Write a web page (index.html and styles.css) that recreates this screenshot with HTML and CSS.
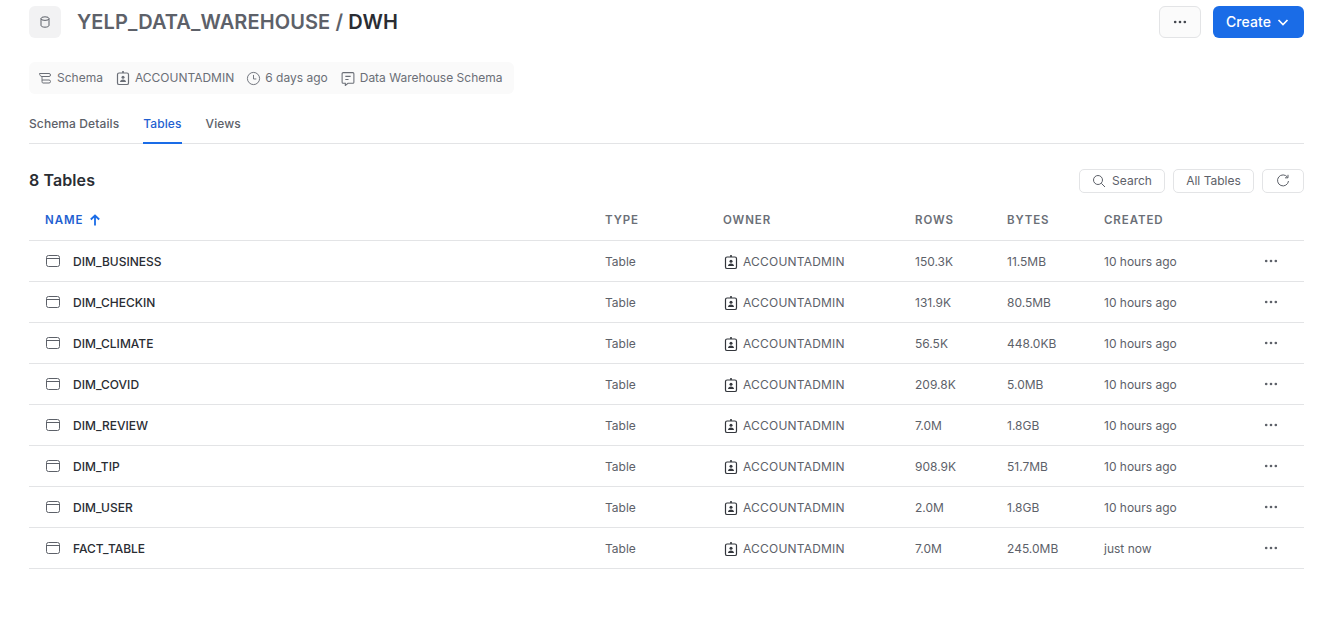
FILE: index.html
```html
<!DOCTYPE html>
<html>
<head>
  <title>YELP_DATA_WAREHOUSE / DWH</title>
  <link rel="stylesheet" href="styles.css">
</head>
<body>
  <svg class="defs" width="0" height="0">
    <symbol id="i-owner" viewBox="0 0 16 16">
      <path d="M8 1v2" fill="none" stroke="currentColor" stroke-width="1.6"/>
      <rect x="2.500" y="3" width="11" height="11.500" rx="1.600" fill="none" stroke="currentColor" stroke-width="1.200"/>
      <circle cx="8" cy="7.200" r="1.500" fill="currentColor"/>
      <path d="M5 12c0-1.700 1.300-2.600 3-2.600s3 .9 3 2.600z" fill="currentColor"/>
    </symbol>
    <symbol id="i-table" viewBox="0 0 16 16">
      <rect x="1.500" y="2.500" width="13" height="11" rx="2" fill="none" stroke="currentColor" stroke-width="1"/>
      <path d="M1.500 5.500h13" fill="none" stroke="currentColor" stroke-width="1"/>
    </symbol>
    <symbol id="i-more" viewBox="0 0 16 16">
      <circle cx="2.500" cy="8" r="1.500" fill="currentColor"/>
      <circle cx="8" cy="8" r="1.500" fill="currentColor"/>
      <circle cx="13.500" cy="8" r="1.500" fill="currentColor"/>
    </symbol>
  </svg>

  <header class="top">
    <div class="db-icon">
      <svg width="12" height="12" viewBox="0 0 12 12" fill="none" stroke="#5d6169" stroke-width="1">
        <ellipse cx="6" cy="2.600" rx="4" ry="1.800"/>
        <path d="M2 2.600v6.800c0 1 1.800 1.800 4 1.800s4-.8 4-1.800V2.600"/>
      </svg>
    </div>
    <h1 class="title">YELP_DATA_WAREHOUSE / <b>DWH</b></h1>
    <button class="btn-more"><svg width="14" height="14"><use href="#i-more"/></svg></button>
    <button class="btn-create"><span class="create-label">Create</span>
      <svg width="12" height="12" viewBox="0 0 12 12" fill="none" stroke="#fff" stroke-width="1.700"><path d="M1.500 4l4.500 4.500L10.500 4"/></svg>
    </button>
  </header>

  <div class="meta">
    <span class="meta-item">
      <svg width="15" height="14" viewBox="0 0 14 14" fill="none" stroke="currentColor" stroke-width="1"><path d="M1 2.500h9.500a1.500 1.500 0 0 1 0 3H3.500M3.500 5.500c0 1.500 0 3.500 0 3.500h7a1.500 1.500 0 0 1 1.500 1.500v0a1.500 1.500 0 0 1-1.500 1.500h-6c-1 0-1-1-1-3"/><path d="M1 2.500c0 1.500 1 3 2.500 3"/></svg>
      <span>Schema</span></span>
    <span class="meta-item">
      <svg width="16" height="16"><use href="#i-owner"/></svg>
      <span>ACCOUNTADMIN</span></span>
    <span class="meta-item">
      <svg width="15" height="15" viewBox="0 0 16 16" fill="none" stroke="currentColor" stroke-width="1"><circle cx="8" cy="8" r="6.500"/><path d="M8 4.200V8.500h3"/></svg>
      <span>6 days ago</span></span>
    <span class="meta-item">
      <svg width="16" height="15" viewBox="0 0 14 14" fill="none" stroke="currentColor" stroke-width="1"><path d="M2.500 1.500h9a1 1 0 0 1 1 1v8a1 1 0 0 1-1 1H7l-2.500 2v-2h-2a1 1 0 0 1-1-1v-8a1 1 0 0 1 1-1z"/><path d="M4.500 5h5M4.500 8h3"/></svg>
      <span>Data Warehouse Schema</span></span>
  </div>

  <nav class="tabs">
    <a class="tab">Schema Details</a>
    <a class="tab active">Tables</a>
    <a class="tab">Views</a>
  </nav>

  <div class="list-head">
    <h2 class="count">8 Tables</h2>
    <button class="tool tool-search">
      <svg width="14" height="14" viewBox="0 0 14 14" fill="none" stroke="currentColor" stroke-width="1"><circle cx="6" cy="6" r="4.500"/><path d="M9.300 9.300l3.700 3.700"/></svg>
      Search</button>
    <button class="tool tool-all">All Tables</button>
    <button class="tool tool-refresh">
      <svg width="14" height="14" viewBox="0 0 14 14" fill="none" stroke="currentColor" stroke-width="1"><path d="M11.500 3.200A5.500 5.500 0 1 0 12.500 7"/><path d="M12 .8v3H9"/></svg>
    </button>
  </div>

  <table class="tables">
    <colgroup>
      <col class="c-name"><col class="c-type"><col class="c-owner"><col class="c-rows"><col class="c-bytes"><col class="c-created"><col class="c-more">
    </colgroup>
    <thead>
      <tr>
        <th class="sorted">NAME
          <svg width="12" height="12" viewBox="0 0 12 12" fill="none" stroke="#1a6ce7" stroke-width="1.800"><path d="M6 11.500V1.500M1.800 5.500L6 1.500l4.200 4"/></svg>
        </th>
        <th>TYPE</th><th>OWNER</th><th>ROWS</th><th>BYTES</th><th>CREATED</th><th></th>
      </tr>
    </thead>
    <tbody>
      <tr><td class="name"><svg width="16" height="16"><use href="#i-table"/></svg>DIM_BUSINESS</td><td>Table</td><td class="owner"><svg width="16" height="16"><use href="#i-owner"/></svg>ACCOUNTADMIN</td><td>150.3K</td><td>11.5MB</td><td>10 hours ago</td><td class="more"><svg width="14" height="14"><use href="#i-more"/></svg></td></tr>
      <tr><td class="name"><svg width="16" height="16"><use href="#i-table"/></svg>DIM_CHECKIN</td><td>Table</td><td class="owner"><svg width="16" height="16"><use href="#i-owner"/></svg>ACCOUNTADMIN</td><td>131.9K</td><td>80.5MB</td><td>10 hours ago</td><td class="more"><svg width="14" height="14"><use href="#i-more"/></svg></td></tr>
      <tr><td class="name"><svg width="16" height="16"><use href="#i-table"/></svg>DIM_CLIMATE</td><td>Table</td><td class="owner"><svg width="16" height="16"><use href="#i-owner"/></svg>ACCOUNTADMIN</td><td>56.5K</td><td>448.0KB</td><td>10 hours ago</td><td class="more"><svg width="14" height="14"><use href="#i-more"/></svg></td></tr>
      <tr><td class="name"><svg width="16" height="16"><use href="#i-table"/></svg>DIM_COVID</td><td>Table</td><td class="owner"><svg width="16" height="16"><use href="#i-owner"/></svg>ACCOUNTADMIN</td><td>209.8K</td><td>5.0MB</td><td>10 hours ago</td><td class="more"><svg width="14" height="14"><use href="#i-more"/></svg></td></tr>
      <tr><td class="name"><svg width="16" height="16"><use href="#i-table"/></svg>DIM_REVIEW</td><td>Table</td><td class="owner"><svg width="16" height="16"><use href="#i-owner"/></svg>ACCOUNTADMIN</td><td>7.0M</td><td>1.8GB</td><td>10 hours ago</td><td class="more"><svg width="14" height="14"><use href="#i-more"/></svg></td></tr>
      <tr><td class="name"><svg width="16" height="16"><use href="#i-table"/></svg>DIM_TIP</td><td>Table</td><td class="owner"><svg width="16" height="16"><use href="#i-owner"/></svg>ACCOUNTADMIN</td><td>908.9K</td><td>51.7MB</td><td>10 hours ago</td><td class="more"><svg width="14" height="14"><use href="#i-more"/></svg></td></tr>
      <tr><td class="name"><svg width="16" height="16"><use href="#i-table"/></svg>DIM_USER</td><td>Table</td><td class="owner"><svg width="16" height="16"><use href="#i-owner"/></svg>ACCOUNTADMIN</td><td>2.0M</td><td>1.8GB</td><td>10 hours ago</td><td class="more"><svg width="14" height="14"><use href="#i-more"/></svg></td></tr>
      <tr><td class="name"><svg width="16" height="16"><use href="#i-table"/></svg>FACT_TABLE</td><td>Table</td><td class="owner"><svg width="16" height="16"><use href="#i-owner"/></svg>ACCOUNTADMIN</td><td>7.0M</td><td>245.0MB</td><td>just now</td><td class="more"><svg width="14" height="14"><use href="#i-more"/></svg></td></tr>
    </tbody>
  </table>
</body>
</html>
```

FILE: styles.css
```css
html { background: #fff; }
body {
  margin: 0;
  padding: 6px 37px 0 29px;
  font-family: Inter, "Liberation Sans", sans-serif;
  font-size: 12px;
  color: #5d6169;
}
button { font-family: inherit; cursor: pointer; }
.defs { position: absolute; }

.top { display: flex; align-items: center; height: 32px; }
.db-icon {
  width: 32px; height: 32px;
  border-radius: 6px;
  background: #f2f2f3;
  display: flex; align-items: center; justify-content: center;
}
.title {
  margin: 0 auto 0 16px;
  font-size: 20px; font-weight: 600;
  letter-spacing: 0.100px;
  color: #5d6169;
  line-height: 32px;
}
.title b { font-weight: 600; color: #2a2d33; }
.btn-more {
  width: 42px; height: 32px;
  border: 1px solid #e3e4e6; border-radius: 6px;
  background: #fbfbfb;
  color: #44474e;
  display: flex; align-items: center; justify-content: center;
  padding: 0;
}
.btn-create {
  margin-left: 12px;
  width: 91px; height: 32px;
  border: 0; border-radius: 6px;
  background: #1a6ce7;
  color: #fff;
  font-size: 14px; font-weight: 500;
  display: flex; align-items: center; justify-content: center; gap: 6px;
  padding: 0 2px 0 0;
}
.create-label { padding-bottom: 2px; letter-spacing: 0.100px; }

.meta {
  display: inline-flex; align-items: center; gap: 12px;
  margin-top: 24px;
  height: 32px;
  padding: 0 12px 0 9px;
  border-radius: 6px;
  background: #fafafa;
  vertical-align: top;
}
.meta-item { display: flex; align-items: center; gap: 4px; color: #6b6f77; }
.meta-item span { padding-bottom: 2px; }

.tabs {
  display: flex; gap: 24px;
  margin-top: 13px;
  height: 36px;
  border-bottom: 1px solid #e3e4e6;
}
.tab {
  height: 37px;
  box-sizing: border-box;
  padding-top: 9px;
  font-weight: 500;
  letter-spacing: 0.100px;
  color: #5d6169;
}
.tab.active { color: #1f5fd1; border-bottom: 1px solid #1a6ce7; box-shadow: inset 0 -1px 0 #1a6ce7; }

.list-head { display: flex; align-items: center; margin-top: 24px; height: 25px; }
.count {
  margin: 0 auto 0 0;
  padding-bottom: 2px;
  font-size: 16px; font-weight: 600;
  letter-spacing: 0.100px;
  color: #2a2d33;
}
.tool {
  height: 24px;
  border: 1px solid #e3e4e6; border-radius: 5px;
  background: #fff;
  color: #5d6169;
  font-size: 12px;
  display: flex; align-items: center; justify-content: center; gap: 6px;
  padding: 0;
  margin-left: 8px;
}
.tool-search { width: 86px; }
.tool-all { width: 81px; }
.tool-refresh { width: 42px; }

.tables { width: 1275px; border-collapse: collapse; table-layout: fixed; margin-top: 7px; }
.c-name { width: 576px; }
.c-type { width: 118px; }
.c-owner { width: 192px; }
.c-rows { width: 92px; }
.c-bytes { width: 97px; }
.c-created { width: 152px; }
th {
  height: 40px;
  padding: 0;
  text-align: left;
  font-size: 11.500px; font-weight: 600;
  letter-spacing: 0.900px;
  color: #6b6f77;
  border-bottom: 1px solid #e3e4e6;
}
th.sorted { padding-left: 16px; color: #1f5fd1; }
th.sorted svg { vertical-align: -2px; margin-left: 2px; }
td {
  height: 38px;
  padding: 2px 0 0;
  line-height: 16px;
  border-bottom: 1px solid #e3e4e6;
  color: #5d6169;
  white-space: nowrap;
}
td svg { vertical-align: top; }
td.name { padding-left: 16px; font-weight: 500; color: #2a2d33; }
td.name svg { margin: -1px 12px 0 0; color: #5d6169; }
td.owner { letter-spacing: 0.200px; }
td.owner svg { margin-right: 4px; color: #33363c; }
td.more { padding-left: 8px; color: #5d6169; }
```
